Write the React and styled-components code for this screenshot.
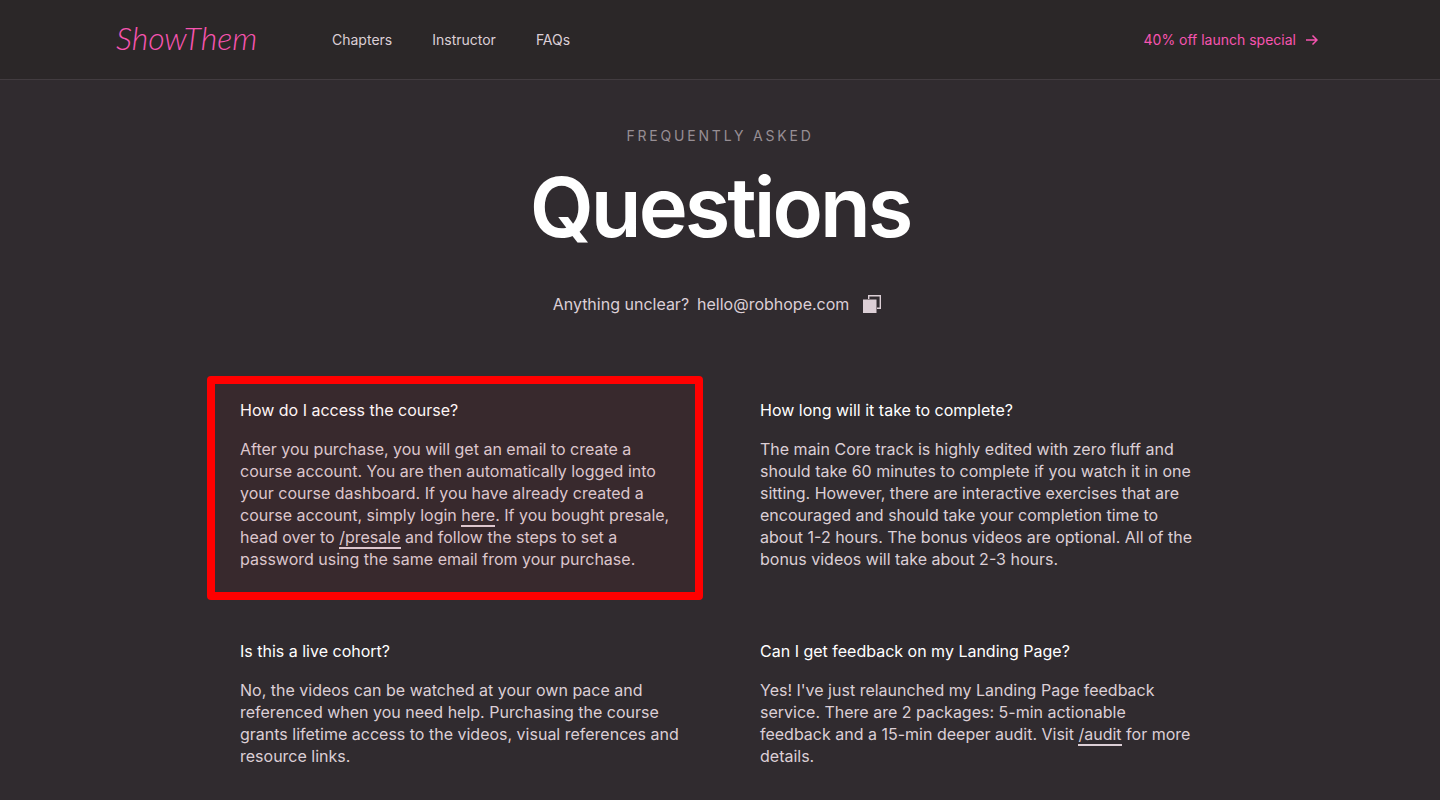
import React from "react";
import styled, { createGlobalStyle, css } from "styled-components";

const colors = {
  page: "#302b2f",
  header: "#2b2728",
  line: "#423c40",
  pink: "#f754b0",
  text: "#dccfd6",
  muted: "#978e94",
  white: "#ffffff",
  mark: "#ff0000",
};

const App = () => {
  return (
    <>
      <GlobalStyle />
      <Header>
        <HeaderInner>
          <Logo href="#home">ShowThem</Logo>
          <Nav>
            <NavLink href="#chapters">Chapters</NavLink>
            <NavLink href="#instructor">Instructor</NavLink>
            <NavLink href="#faqs">FAQs</NavLink>
          </Nav>
          <Offer href="#pricing">
            40% off launch special
            <ArrowIcon />
          </Offer>
        </HeaderInner>
      </Header>
      <Main>
        <Intro>
          <Kicker>Frequently asked</Kicker>
          <Title>Questions</Title>
          <Contact>
            <span>Anything unclear?</span>
            <MailLink href="mailto:hello@robhope.com">hello@robhope.com</MailLink>
            <CopyButton type="button" aria-label="Copy email address">
              <CopyIcon />
            </CopyButton>
          </Contact>
        </Intro>
        <Questions>
          <Question $marked>
            <h2>How do I access the course?</h2>
            <p>
              After you purchase, you will get an email to create a course
              account. You are then automatically logged into your course
              dashboard. If you have already created a course account, simply
              login <TextLink href="#login">here</TextLink>. If you bought
              presale, head over to{" "}
              <TextLink href="#presale">/presale</TextLink> and follow the steps
              to set a password using the same email from your purchase.
            </p>
          </Question>
          <Question>
            <h2>How long will it take to complete?</h2>
            <p>
              The main Core track is highly edited with zero fluff and should
              take 60 minutes to complete if you watch it in one sitting.
              However, there are interactive exercises that are encouraged and
              should take your completion time to about 1-2 hours. The bonus
              videos are optional. All of the bonus videos will take about 2-3
              hours.
            </p>
          </Question>
          <Question>
            <h2>Is this a live cohort?</h2>
            <p>
              No, the videos can be watched at your own pace and referenced when
              you need help. Purchasing the course grants lifetime access to the
              videos, visual references and resource links.
            </p>
          </Question>
          <Question>
            <h2>Can I get feedback on my Landing Page?</h2>
            <p>
              Yes! I've just relaunched my Landing Page feedback service. There
              are 2 packages: 5-min actionable feedback and a 15-min deeper
              audit. Visit <TextLink href="#audit">/audit</TextLink> for more
              details.
            </p>
          </Question>
        </Questions>
      </Main>
    </>
  );
};

const ArrowIcon = () => (
  <svg width="12" height="12" viewBox="0 0 12 12" fill="none" aria-hidden="true">
    <path d="M0 6h11M6.5 1.5 11 6l-4.5 4.5" stroke="currentColor" strokeWidth="1.5" />
  </svg>
);

const CopyIcon = () => (
  <svg width="18" height="18" viewBox="0 0 18 18" fill="none" aria-hidden="true">
    <path d="M5.7 4V.7h11.6v12.6H14" stroke="currentColor" strokeWidth="1.4" />
    <path d="M0 4.5h13.5V18H0z" fill="currentColor" />
  </svg>
);

const GlobalStyle = createGlobalStyle`
  * {
    box-sizing: border-box;
    margin: 0;
    padding: 0;
  }
  body {
    background: ${colors.page};
    color: ${colors.text};
    font-family: Inter, "Liberation Sans", sans-serif;
    font-size: 16px;
    line-height: 22px;
    -webkit-font-smoothing: antialiased;
  }
  a {
    color: inherit;
    text-decoration: none;
  }
`;

const Header = styled.header`
  background: ${colors.header};
  border-bottom: 1px solid ${colors.line};
`;

const HeaderInner = styled.div`
  max-width: 1248px;
  min-height: 79px;
  margin: 0 auto;
  padding: 0 26px 0 20px;
  display: flex;
  align-items: center;
`;

const Logo = styled.a`
  width: 216px;
  padding-bottom: 4px;
  color: ${colors.pink};
  font-family: Lato, "Liberation Sans", sans-serif;
  font-size: 32px;
  font-style: italic;
  font-weight: 300;
  line-height: 40px;
`;

const Nav = styled.nav`
  display: flex;
  flex: 1;
  gap: 40px;
`;

const NavLink = styled.a`
  font-size: 14px;
  &:hover {
    color: ${colors.white};
  }
`;

const Offer = styled.a`
  display: flex;
  align-items: center;
  gap: 10px;
  color: ${colors.pink};
  font-size: 14px;
`;

const Main = styled.main`
  max-width: 1008px;
  margin: 0 auto;
  padding: 45px 24px;
`;

const Intro = styled.div`
  display: flex;
  flex-direction: column;
  align-items: center;
`;

const Kicker = styled.p`
  color: ${colors.muted};
  font-size: 14px;
  letter-spacing: 0.2em;
  text-transform: uppercase;
`;

const Title = styled.h1`
  margin-top: 10px;
  color: ${colors.white};
  font-size: 83px;
  font-weight: 600;
  letter-spacing: -3px;
  line-height: 100px;
`;

const Contact = styled.div`
  display: flex;
  align-items: center;
  gap: 8px;
  margin-top: 36px;
`;

const MailLink = styled.a`
  &:hover {
    color: ${colors.white};
  }
`;

const CopyButton = styled.button`
  display: flex;
  padding: 0 6px;
  border: 0;
  background: none;
  color: ${colors.text};
  cursor: pointer;
`;

const Questions = styled.section`
  display: grid;
  grid-template-columns: 1fr 1fr;
  gap: 70px 80px;
  margin-top: 84px;
  @media (max-width: 768px) {
    grid-template-columns: 1fr;
  }
`;

const Question = styled.article`
  position: relative;
  h2 {
    margin-bottom: 17px;
    color: ${colors.white};
    font-size: 16px;
    font-weight: 400;
  }
  ${({ $marked }) =>
    $marked &&
    css`
      &::after {
        content: "";
        position: absolute;
        inset: -23px -23px -30px -33px;
        border: 8px solid ${colors.mark};
        border-radius: 4px;
        background: rgba(255, 0, 0, 0.04);
        pointer-events: none;
      }
    `}
`;

const TextLink = styled.a`
  border-bottom: 2px solid currentColor;
`;

export default App;
